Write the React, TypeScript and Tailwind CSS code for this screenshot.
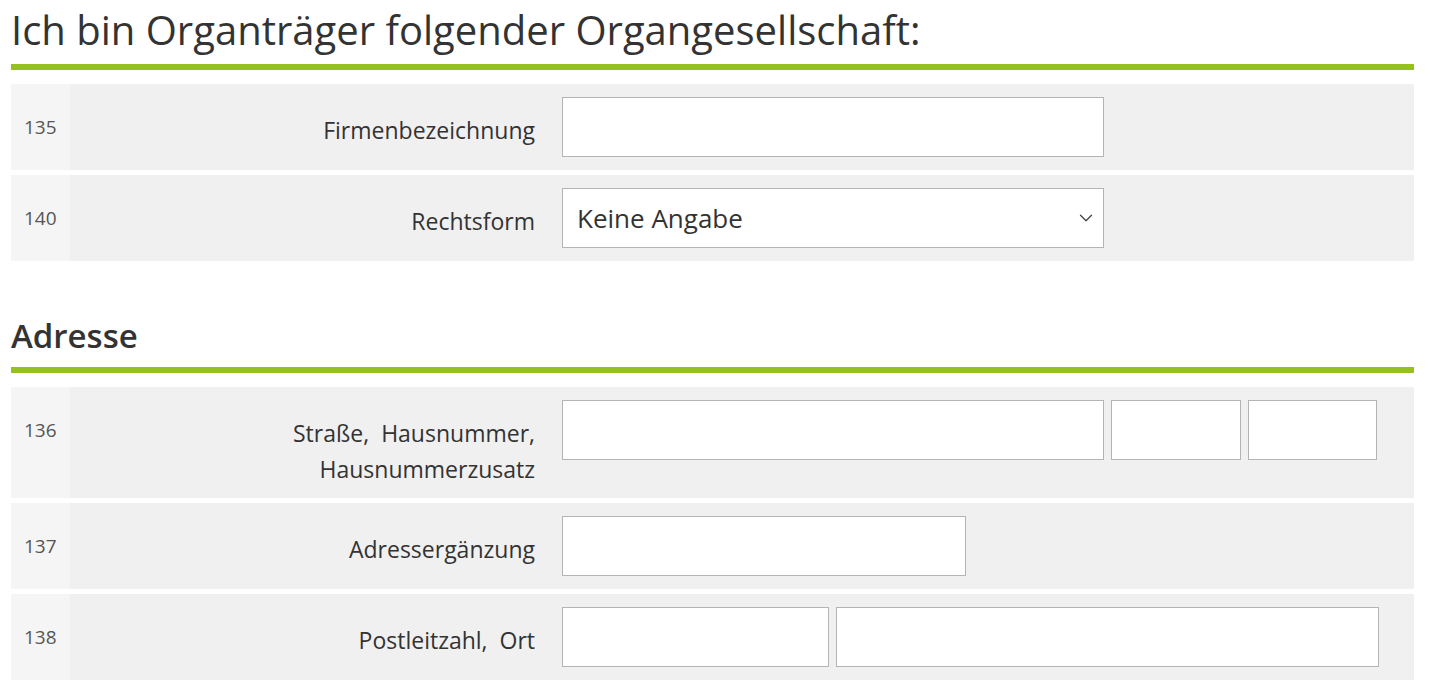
import { ChevronDown } from "lucide-react";

type Row = {
  nr: string;
  label: string[];
  fields: { w: string; select?: string }[];
};

const firma: Row[] = [
  { nr: "135", label: ["Firmenbezeichnung"], fields: [{ w: "w-[542px]" }] },
  { nr: "140", label: ["Rechtsform"], fields: [{ w: "w-[542px]", select: "Keine Angabe" }] },
];

const adresse: Row[] = [
  {
    nr: "136",
    label: ["Straße,  Hausnummer,", "Hausnummerzusatz"],
    fields: [{ w: "w-[542px]" }, { w: "w-[130px]" }, { w: "w-[129px]" }],
  },
  { nr: "137", label: ["Adressergänzung"], fields: [{ w: "w-[404px]" }] },
  { nr: "138", label: ["Postleitzahl,  Ort"], fields: [{ w: "w-[267px]" }, { w: "w-[543px]" }] },
];

function FormRow({ row }: { row: Row }) {
  return (
    <div className="flex bg-[#f0f0f0]">
      <div className="w-[59px] shrink-0 bg-[#f5f5f5] pl-[13px] pt-[31px] text-[19px] leading-6 text-[#555]">
        {row.nr}
      </div>
      <div className="w-[465px] shrink-0 pt-[28px] pb-[11px] text-right text-[23px] leading-[36px] text-[#333] whitespace-pre">
        {row.label.map((l) => (
          <div key={l}>{l}</div>
        ))}
      </div>
      <div className="flex gap-[7px] pl-[27px] py-[13px]">
        {row.fields.map((f, i) =>
          f.select ? (
            <div
              key={i}
              className={`${f.w} h-[60px] flex items-center justify-between border border-[#b4b4b4] bg-white pl-[14px] pr-[6px] text-[26px] text-[#333]`}
            >
              <span>{f.select}</span>
              <ChevronDown size={22} strokeWidth={1.4} className="text-[#444]" />
            </div>
          ) : (
            <input key={i} className={`${f.w} h-[60px] border border-[#b4b4b4] bg-white outline-none`} />
          )
        )}
      </div>
    </div>
  );
}

export default function App() {
  return (
    <div className="min-h-screen bg-white px-[11px] pt-[6px] font-['Open_Sans',sans-serif] text-[#333]">
      <h1 className="text-[40px] leading-[48px] font-normal">Ich bin Organträger folgender Organgesellschaft:</h1>
      <div className="mt-[10px] h-[6px] w-[1403px] bg-[#95c11f]" />
      <div className="mt-[14px] flex w-[1403px] flex-col gap-[5px]">
        {firma.map((r) => (
          <FormRow key={r.nr} row={r} />
        ))}
      </div>

      <h2 className="mt-[55px] text-[33px] leading-[40px] font-semibold">Adresse</h2>
      <div className="mt-[11px] h-[6px] w-[1403px] bg-[#95c11f]" />
      <div className="mt-[14px] flex w-[1403px] flex-col gap-[5px]">
        {adresse.map((r) => (
          <FormRow key={r.nr} row={r} />
        ))}
      </div>
    </div>
  );
}
